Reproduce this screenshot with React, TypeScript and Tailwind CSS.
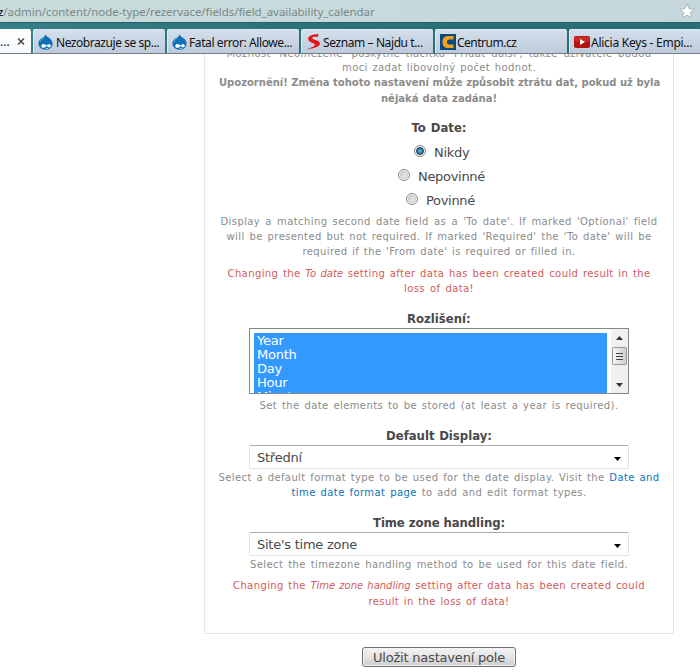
import React from "react";

type LineProps = { className?: string; children: React.ReactNode };

function Small({ className = "", children }: LineProps) {
  return (
    <div className={`mx-auto h-[15px] whitespace-nowrap text-[10px] leading-[15px] [text-align-last:justify] ${className}`}>
      {children}
    </div>
  );
}

function Label({ className = "", children }: LineProps) {
  return (
    <div className={`mx-auto h-[18px] whitespace-nowrap font-['DejaVu_Sans_Condensed','DejaVu_Sans',sans-serif] text-[13px] font-bold leading-[18px] text-[#494949] [font-stretch:semi-condensed] [text-align-last:justify] ${className}`}>
      {children}
    </div>
  );
}

function Drop() {
  return (
    <svg className="h-4 w-[15px] shrink-0" viewBox="0 0 15 16">
      <path d="M7.600.2C8 1.800 9.300 2.500 11 3.700 13.300 5.300 14.600 7.200 14.600 9.700c0 3.500-3.100 6.100-7 6.100S.4 13.200.4 9.600c0-2.600 1.700-4.200 3.600-5.500C6 2.800 7.100 2.200 7.600.2z" fill="#0f70b5" />
      <path d="M6 3.500C4.500 4.700 2.600 5.700 2 8" stroke="#5fb2e0" strokeWidth="1" fill="none" />
      <path d="M3.300 12.200c0-2.300 2.500-2.900 4.200-1.500l1.100.8c1.300-1.300 3.600-2 4.200 0 .4 1.600-1.600 2.200-2.600 1.400l-1.400-.9c-1.400 1.300-2.500 2-3.800 1.800-1-.1-1.700-.7-1.700-1.600z" fill="#fff" />
      <path d="M7.500 14.200c1.200.5 2 .3 2.800-.1" stroke="#fff" strokeWidth=".8" fill="none" />
    </svg>
  );
}

function SeznamIcon() {
  return (
    <svg className="h-4 w-[15px] shrink-0" viewBox="0 0 15 16">
      <path d="M12.500.2 11.800 3C8 2.400 6.200 3 6.300 4.200c.2 1.600 7.800 2 7.700 5.400C13.900 13.500 5.700 14.600.6 15.800c3.300-2 8.200-3 8.300-5C9 9 2 8.300 2.100 4.700 2.200 1.400 7.800-.2 12.500.2z" fill="#e3151b" />
    </svg>
  );
}

function CentrumIcon() {
  return (
    <svg className="h-4 w-4 shrink-0" viewBox="0 0 16 16">
      <path d="M0 0h16v16H0z" fill="#0b4a80" />
      <path d="M13.500 2H8.500C4 2 2.500 4.500 2.500 8s1.500 6 6 6h5v-3.500H9.500C7.500 10.500 7 9.500 7 8s.5-2.500 2.500-2.500h4z" fill="#f5a21b" />
    </svg>
  );
}

function YouTubeIcon() {
  return (
    <svg className="h-3 w-4 shrink-0" viewBox="0 0 16 12">
      <rect width="16" height="12" rx="2" fill="#b3120f" />
      <rect x=".5" y=".5" width="15" height="5" rx="2" fill="#ca2a24" />
      <path d="M6 3v6l5-3z" fill="#fff" />
    </svg>
  );
}

function Tab({ icon, className = "", children }: LineProps & { icon: React.ReactNode }) {
  return (
    <div className="flex h-6 w-[132px] shrink-0 items-center rounded-t-[2px] border-t border-l border-[#dfe9f2] bg-linear-to-b from-[#d3dfeb] to-[#bfcbdb] pl-1">
      {icon}
      <span className={`mt-[2px] whitespace-nowrap ${className}`}>{children}</span>
    </div>
  );
}

function Radio({ checked = false }: { checked?: boolean }) {
  return (
    <span className="mt-[2px] flex h-3 w-3 shrink-0 items-center justify-center rounded-full border border-[#858789] bg-[#f4f4f4]">
      {checked ? (
        <span className="h-2 w-2 rounded-full border border-[#17364d] bg-radial from-[#58bfe8] to-[#124f7c]" />
      ) : (
        <span className="h-2 w-2 rounded-full border border-[#c4c6c8] bg-linear-to-br from-[#c8cacd] to-[#f4f4f4]" />
      )}
    </span>
  );
}

function Option({ checked, className = "", children }: LineProps & { checked?: boolean }) {
  return (
    <div className="flex h-6 items-start justify-center pl-[5px] text-[13px] leading-[18px]">
      <Radio checked={checked} />
      <span className={`ml-2 mt-px whitespace-nowrap tracking-[-0.3px] ${className}`}>{children}</span>
    </div>
  );
}

function SelectBox({ children }: LineProps) {
  return (
    <div className="mx-auto flex h-6 w-[380px] items-center justify-between rounded-[2px] border border-[#dce3ea] border-t-[#a8abb1] pl-[7px] pr-[7px] text-[13px] leading-[18px]">
      <span className="mt-[2px] whitespace-nowrap tracking-[-0.25px]">{children}</span>
      <svg className="mt-1 h-1 w-[7px]" viewBox="0 0 7 4">
        <path d="M0 0h7L3.500 4z" fill="#000" />
      </svg>
    </div>
  );
}

export default function App() {
  return (
    <div className="h-[672px] w-[700px] overflow-hidden bg-white font-['DejaVu_Sans',sans-serif] text-[#494949]">
      <div className="flex h-[23px] items-center justify-between border-b border-[#286069] bg-linear-to-r from-[#c9dcdb] to-[#c5d7dc] pr-[5px] text-[12px] leading-4">
        <div className="mt-[2px] h-4 w-[374px] whitespace-nowrap font-['Noto_Sans',sans-serif] text-[11.5px] tracking-[-0.05px] text-[#7b8787]">
          <span className="-ml-[2px] text-black">z</span>/admin/content/node-type/rezervace/fields/field_availability_calendar
        </div>
        <svg className="h-4 w-4" viewBox="0 0 16 16">
          <path d="m8 .7 2.100 5 5.300.4-4.100 3.400 1.400 5.300L8 12l-4.700 2.800 1.400-5.300L.6 6.100l5.300-.4z" fill="#fff" stroke="#a3abae" strokeWidth=".8" />
        </svg>
      </div>
      <div className="flex h-[31px] items-end gap-[2px] overflow-hidden border-b border-[#727e84] bg-linear-to-r from-[#357f88] via-[#297078] to-[#2a6d75] font-['Noto_Sans',sans-serif] text-[12px] leading-4 text-[#111]">
        <div className="flex h-6 w-[31px] shrink-0 items-center rounded-tr-[2px] bg-linear-to-b from-white to-[#f5f8fb]">
          <span className="mt-[2px]">...</span>
          <svg className="ml-[7px] h-[7px] w-2" viewBox="0 0 8 7">
            <path d="m1 .5 6 6m0-6-6 6" stroke="#4a4a4a" strokeWidth="1.500" />
          </svg>
        </div>
        <Tab icon={<Drop />} className="ml-[3px] tracking-[-0.45px]">Nezobrazuje se sp...</Tab>
        <Tab icon={<Drop />} className="ml-[2px] tracking-[-0.4px]">Fatal error: Allowe...</Tab>
        <Tab icon={<SeznamIcon />} className="ml-[2px] tracking-[-0.4px]">Seznam – Najdu t...</Tab>
        <Tab icon={<CentrumIcon />} className="ml-px tracking-[-0.5px]">Centrum.cz</Tab>
        <Tab icon={<YouTubeIcon />} className="ml-px tracking-[-0.25px]">Alicia Keys - Empi...</Tab>
      </div>
      <div className="ml-[204px] h-[580px] w-[470px] overflow-hidden border border-t-0 border-[#dde8f0]">
        <div className="-mt-2 text-[#8b8b8b]">
          <Small className="w-[425px] tracking-[0.4px]">Možnost 'Neomezeně' poskytne tlačítko 'Přidat další', takže uživatelé budou</Small>
          <Small className="-mt-px w-[194px] tracking-[0.4px]">moci zadat libovolný počet hodnot.</Small>
          <Small className="w-[440px] font-bold">Upozornění! Změna tohoto nastavení může způsobit ztrátu dat, pokud už byla</Small>
          <Small className="mt-px w-[116px] font-bold">nějaká data zadána!</Small>
        </div>
        <Label className="mt-[13px] w-[55px]">To Date:</Label>
        <div className="mt-[6px]">
          <Option checked className="w-[35px]">Nikdy</Option>
          <Option className="w-[67px]">Nepovinné</Option>
          <Option className="w-[51px]">Povinné</Option>
        </div>
        <div className="-mt-px tracking-[0.4px] text-[#8b8b8b]">
          <Small className="w-[437px]">Display a matching second date field as a 'To date'. If marked 'Optional' field</Small>
          <Small className="w-[425px]">will be presented but not required. If marked 'Required' the 'To date' will be</Small>
          <Small className="w-[273px]">required if the 'From date' is required or filled in.</Small>
        </div>
        <div className="mt-[7px] tracking-[0.4px] text-[#d35a5a]">
          <Small className="w-[423px]">Changing the <em className="tracking-normal">To date</em> setting after data has been created could result in the</Small>
          <Small className="w-[70px]">loss of data!</Small>
        </div>
        <Label className="mt-[14px] w-[64px]">Rozlišení:</Label>
        <div className="mx-auto flex h-[66px] w-[380px] border border-[#828790] text-[13px] leading-[14px]">
          <div className="ml-1 mt-1 w-[353px] overflow-hidden bg-[#3399ff] pl-[3px] tracking-[-0.25px] text-white">
            <div className="pt-px">Year</div>
            <div>Month</div>
            <div>Day</div>
            <div>Hour</div>
            <div>Minute</div>
          </div>
          <div className="ml-auto flex w-[17px] flex-col items-center bg-[#f0f0f0]">
            <svg className="mt-[7px] h-1 w-[7px]" viewBox="0 0 7 4"><path d="M0 4h7L3.500 0z" fill="#333" /></svg>
            <div className="mt-[7px] mr-px flex h-[18px] w-[15px] items-center justify-center rounded-[2px] border border-[#979797] bg-linear-to-r from-[#f7f7f7] to-[#cfcfcf]">
              <div className="flex w-[7px] flex-col gap-[2px]">
                <div className="h-px bg-[#444]" />
                <div className="h-px bg-[#444]" />
                <div className="h-px bg-[#444]" />
              </div>
            </div>
            <svg className="mt-[18px] h-1 w-[7px]" viewBox="0 0 7 4"><path d="M0 0h7L3.500 4z" fill="#333" /></svg>
          </div>
        </div>
        <Small className="mt-1 w-[359px] tracking-[0.4px] text-[#8b8b8b]">Set the date elements to be stored (at least a year is required).</Small>
        <Label className="mt-[14px] w-[106px]">Default Display:</Label>
        <SelectBox>Střední</SelectBox>
        <div className="mt-px tracking-[0.4px] text-[#8b8b8b]">
          <Small className="w-[441px]">Select a default format type to be used for the date display. Visit the <span className="text-[#0b74b8]">Date and</span></Small>
          <Small className="w-[295px]"><span className="text-[#0b74b8]">time date format page</span> to add and edit format types.</Small>
        </div>
        <Label className="mt-[14px] w-[132px] tracking-[-0.1px]">Time zone handling:</Label>
        <SelectBox>Site's time zone</SelectBox>
        <Small className="mt-px w-[378px] tracking-[0.4px] text-[#8b8b8b]">Select the timezone handling method to be used for this date field.</Small>
        <div className="mt-[6px] tracking-[0.4px] text-[#d35a5a]">
          <Small className="w-[412px]">Changing the <em className="tracking-normal">Time zone handling</em> setting after data has been created could</Small>
          <Small className="mt-px w-[141px]">result in the loss of data!</Small>
        </div>
      </div>
      <button className="ml-[362px] mt-[13px] block h-5 w-[154px] rounded-[3px] border border-[#707070] bg-linear-to-b from-[#f4f4f4] via-[#e4e4e4] to-[#cdcdcd] pt-px text-[13px] leading-[18px] tracking-[-0.2px] shadow-[inset_0_0_0_1px_#f4f4f4]">
        Uložit nastavení pole
      </button>
    </div>
  );
}
